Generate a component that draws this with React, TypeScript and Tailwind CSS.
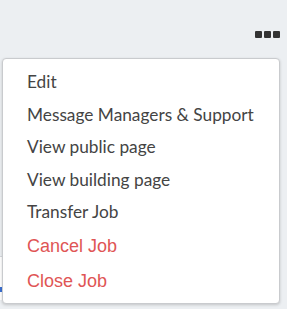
import React from "react";

const lato = { fontFamily: "Lato, 'Noto Sans', sans-serif" };

export default function App() {
  const items = [
    "Edit",
    "Message Managers & Support",
    "View public page",
    "View building page",
    "Transfer Job",
  ];
  return (
    <div className="relative w-[287px] h-[309px] bg-[#eceff2] overflow-hidden">
      <div className="flex justify-end pr-[7px] pt-[31px] gap-[2px]">
        <span className="w-[7px] h-[7px] rounded-[1px] bg-[#333]" />
        <span className="w-[7px] h-[7px] rounded-[1px] bg-[#333]" />
        <span className="w-[7px] h-[7px] rounded-[1px] bg-[#333]" />
      </div>
      <div className="mt-[218px] w-[260px] h-[44px] bg-white border-t border-[#d6d9dd] flex flex-col">
        <div className="mt-[30px] w-[2px] h-[5px] bg-[#3b6fd1]" />
      </div>
      <div className="absolute left-[2px] top-[58px] w-[278px] h-[246px] bg-white border border-[#c9cbce] rounded-[4px] shadow-[0_1px_3px_rgba(0,0,0,0.18)] pt-[7px] pb-[5px] flex flex-col">
        {items.map((t) => (
          <div
            key={t}
            className="pl-[24px] text-[17.3px] leading-[32.5px] text-[#444] whitespace-nowrap"
            style={lato}
          >
            {t}
          </div>
        ))}
        {["Cancel Job", "Close Job"].map((t) => (
          <div
            key={t}
            className="pl-[24px] text-[18px] leading-[35px] text-[#e05555] whitespace-nowrap font-['Liberation_Sans',Arial,sans-serif]"
          >
            {t}
          </div>
        ))}
      </div>
    </div>
  );
}
